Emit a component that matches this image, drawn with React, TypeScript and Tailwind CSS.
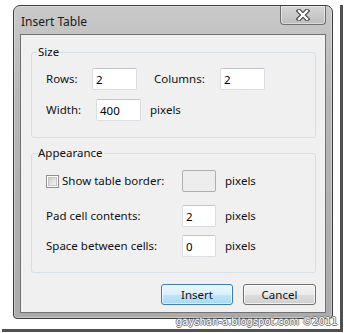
import React from 'react';

function CloseButton() {
  return (
    <div className="flex h-[19px] w-[46px] items-center justify-center rounded-b-[4px] border border-t-0 border-[#6e6e6e] bg-gradient-to-b from-[#d6d6d6] to-[#bdbdbd] shadow-[inset_0_0_0_1px_rgba(255,255,255,0.45)]">
      <svg width="14" height="12" viewBox="0 0 14 12">
        <path d="M3 2 L11 10 M11 2 L3 10" stroke="#3d3d3d" strokeWidth="4.5" strokeLinecap="square" fill="none" />
        <path d="M3 2 L11 10 M11 2 L3 10" stroke="#ffffff" strokeWidth="2.4" strokeLinecap="square" fill="none" />
      </svg>
    </div>
  );
}

function TextBox({ value, width }: { value: string; width: string }) {
  return (
    <input
      readOnly
      defaultValue={value}
      className={`${width} h-[22px] rounded-[2px] border border-[#dadde1] border-t-[#c2c5ca] bg-white px-[3px] text-[11.5px] leading-[20px] text-black outline-none`}
    />
  );
}

function Button({ label, primary }: { label: string; primary?: boolean }) {
  return (
    <div
      className={
        primary
          ? 'flex h-[21px] w-[72px] items-center justify-center rounded-[3px] border border-[#3c7fb1] bg-[linear-gradient(#eaf6fd_0%,#d9f0fc_50%,#bee6fd_51%,#a7d9f5_100%)] shadow-[inset_0_0_0_1px_rgba(255,255,255,0.6)]'
          : 'flex h-[21px] w-[73px] items-center justify-center rounded-[3px] border border-[#707070] bg-[linear-gradient(#f2f2f2_0%,#ebebeb_50%,#dddddd_51%,#cfcfcf_100%)] shadow-[inset_0_0_0_1px_rgba(255,255,255,0.7)]'
      }
    >
      {label}
    </div>
  );
}

export default function App() {
  return (
    <div className="relative h-[333px] w-[344px] overflow-hidden bg-white font-['Noto_Sans',sans-serif] text-[11.5px] text-[#111]">
      <div className="ml-[2px] mt-[5px] h-[327px] w-[341px] border-b-[3px] border-r-[3px] border-[#505050] pl-[11px]">
        {/* dialog frame */}
        <div className="flex h-[314px] w-[320px] flex-col rounded-b-[4px] rounded-t-[7px] border border-[#3c3c3c] bg-[linear-gradient(#c9c9c9,#b6b6b6_30%,#ababab)] px-[6px] pb-[5px] shadow-[inset_0_0_0_1px_rgba(255,255,255,0.35)]">
          <div className="flex h-[28px] items-start justify-between">
            <span className="pl-[1px] pt-[8px] text-[12px] leading-[16px] text-[#1a1a1a]">Insert Table</span>
            <CloseButton />
          </div>

          {/* client area */}
          <div className="flex-1 border border-[#727272] bg-[#f0f0f0] pl-[10px] pr-[9px] pt-[9px]">
            <fieldset className="rounded-[3px] border border-[#d5dfe5] px-[14px] pb-[16px] pt-[8px]">
              <legend className="-ml-[9px] px-[1px] leading-[16px]">Size</legend>
              <div className="flex h-[22px] items-center">
                <span className="w-[46px]">Rows:</span>
                <TextBox value="2" width="w-[45px]" />
                <span className="ml-[17px] w-[66px]">Columns:</span>
                <TextBox value="2" width="w-[45px]" />
              </div>
              <div className="mt-[9px] flex h-[22px] items-center">
                <span className="w-[50px]">Width:</span>
                <TextBox value="400" width="w-[45px]" />
                <span className="ml-[9px]">pixels</span>
              </div>
            </fieldset>

            <fieldset className="mt-[7px] rounded-[3px] border border-[#d5dfe5] px-[14px] pb-[15px] pt-[9px]">
              <legend className="-ml-[9px] px-[1px] leading-[16px]">Appearance</legend>
              <div className="flex h-[22px] items-center">
                <div className="flex w-[136px] items-center">
                  <div className="flex h-[13px] w-[13px] items-center justify-center border border-[#8f8f8f] bg-white">
                    <div className="h-[9px] w-[9px] border border-[#c6c6c6] bg-[linear-gradient(135deg,#cfcfcf,#f4f4f4)]" />
                  </div>
                  <span className="ml-[3px]">Show table border:</span>
                </div>
                <div className="h-[22px] w-[34px] rounded-[2px] border border-[#aeaeae] bg-[#ededed]" />
                <span className="ml-[9px]">pixels</span>
              </div>
              <div className="mt-[13px] flex h-[22px] items-center">
                <span className="w-[136px]">Pad cell contents:</span>
                <TextBox value="2" width="w-[34px]" />
                <span className="ml-[9px]">pixels</span>
              </div>
              <div className="mt-[8px] flex h-[22px] items-center">
                <span className="w-[136px]">Space between cells:</span>
                <TextBox value="0" width="w-[34px]" />
                <span className="ml-[9px]">pixels</span>
              </div>
            </fieldset>

            <div className="mt-[11px] flex justify-end gap-[10px]">
              <Button label="Insert" primary />
              <Button label="Cancel" />
            </div>
          </div>
        </div>
      </div>

      {/* watermark */}
      <div className="absolute left-[176px] top-[316px] font-['DejaVu_Sans',sans-serif] text-[10px] leading-[12px] text-white [text-shadow:1px_0_#7a7a7a,-1px_0_#7a7a7a,0_1px_#7a7a7a,0_-1px_#7a7a7a]">
        gayshan-a.blogspot.com ©2011
      </div>
    </div>
  );
}
